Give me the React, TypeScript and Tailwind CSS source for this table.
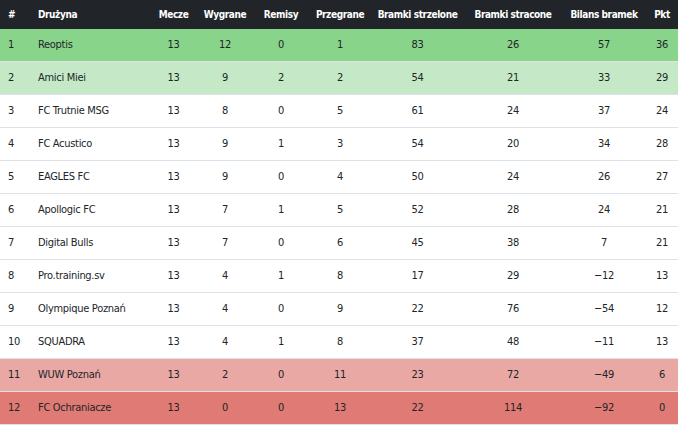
import React from "react";

type Row = {
  pos: number;
  team: string;
  played: number;
  won: number;
  drawn: number;
  lost: number;
  gf: number;
  ga: number;
  diff: string;
  pts: number;
  bg: string;
};

const rows: Row[] = [
  { pos: 1, team: "Reoptis", played: 13, won: 12, drawn: 0, lost: 1, gf: 83, ga: 26, diff: "57", pts: 36, bg: "bg-[#89d48b]" },
  { pos: 2, team: "Amici Miei", played: 13, won: 9, drawn: 2, lost: 2, gf: 54, ga: 21, diff: "33", pts: 29, bg: "bg-[#c5e9c6]" },
  { pos: 3, team: "FC Trutnie MSG", played: 13, won: 8, drawn: 0, lost: 5, gf: 61, ga: 24, diff: "37", pts: 24, bg: "bg-white" },
  { pos: 4, team: "FC Acustico", played: 13, won: 9, drawn: 1, lost: 3, gf: 54, ga: 20, diff: "34", pts: 28, bg: "bg-white" },
  { pos: 5, team: "EAGLES FC", played: 13, won: 9, drawn: 0, lost: 4, gf: 50, ga: 24, diff: "26", pts: 27, bg: "bg-white" },
  { pos: 6, team: "Apollogic FC", played: 13, won: 7, drawn: 1, lost: 5, gf: 52, ga: 28, diff: "24", pts: 21, bg: "bg-white" },
  { pos: 7, team: "Digital Bulls", played: 13, won: 7, drawn: 0, lost: 6, gf: 45, ga: 38, diff: "7", pts: 21, bg: "bg-white" },
  { pos: 8, team: "Pro.training.sv", played: 13, won: 4, drawn: 1, lost: 8, gf: 17, ga: 29, diff: "−12", pts: 13, bg: "bg-white" },
  { pos: 9, team: "Olympique Poznań", played: 13, won: 4, drawn: 0, lost: 9, gf: 22, ga: 76, diff: "−54", pts: 12, bg: "bg-white" },
  { pos: 10, team: "SQUADRA", played: 13, won: 4, drawn: 1, lost: 8, gf: 37, ga: 48, diff: "−11", pts: 13, bg: "bg-white" },
  { pos: 11, team: "WUW Poznań", played: 13, won: 2, drawn: 0, lost: 11, gf: 23, ga: 72, diff: "−49", pts: 6, bg: "bg-[#e9a8a4]" },
  { pos: 12, team: "FC Ochraniacze", played: 13, won: 0, drawn: 0, lost: 13, gf: 22, ga: 114, diff: "−92", pts: 0, bg: "bg-[#df7b74]" },
];

const cols = "grid grid-cols-[30px_120px_47px_56px_56px_62px_93px_98px_84px_32px]";

const headers = ["Mecze", "Wygrane", "Remisy", "Przegrane", "Bramki strzelone", "Bramki stracone", "Bilans bramek", "Pkt"];

export default function App() {
  return (
    <div
      className="w-[678px] bg-white text-[#212529]"
      style={{ fontFamily: '"DejaVu Sans Condensed", "Liberation Sans", sans-serif' }}
    >
      <div className={`${cols} h-[29px] items-center bg-[#212529] text-white text-[10px] font-semibold tracking-[-0.4px]`}>
        <div className="pl-2">#</div>
        <div className="pl-2">Drużyna</div>
        {headers.map((h) => (
          <div key={h} className="text-center whitespace-nowrap">
            {h}
          </div>
        ))}
      </div>
      {rows.map((r) => (
        <div
          key={r.pos}
          className={`${cols} h-[33px] items-center border-b border-[#dee2e6] text-[11px] tracking-[-0.3px] ${r.bg}`}
        >
          <div className="pl-2">{r.pos}</div>
          <div className="pl-2 whitespace-nowrap">{r.team}</div>
          <div className="text-center">{r.played}</div>
          <div className="text-center">{r.won}</div>
          <div className="text-center">{r.drawn}</div>
          <div className="text-center">{r.lost}</div>
          <div className="text-center">{r.gf}</div>
          <div className="text-center">{r.ga}</div>
          <div className="text-center">{r.diff}</div>
          <div className="text-center">{r.pts}</div>
        </div>
      ))}
    </div>
  );
}
